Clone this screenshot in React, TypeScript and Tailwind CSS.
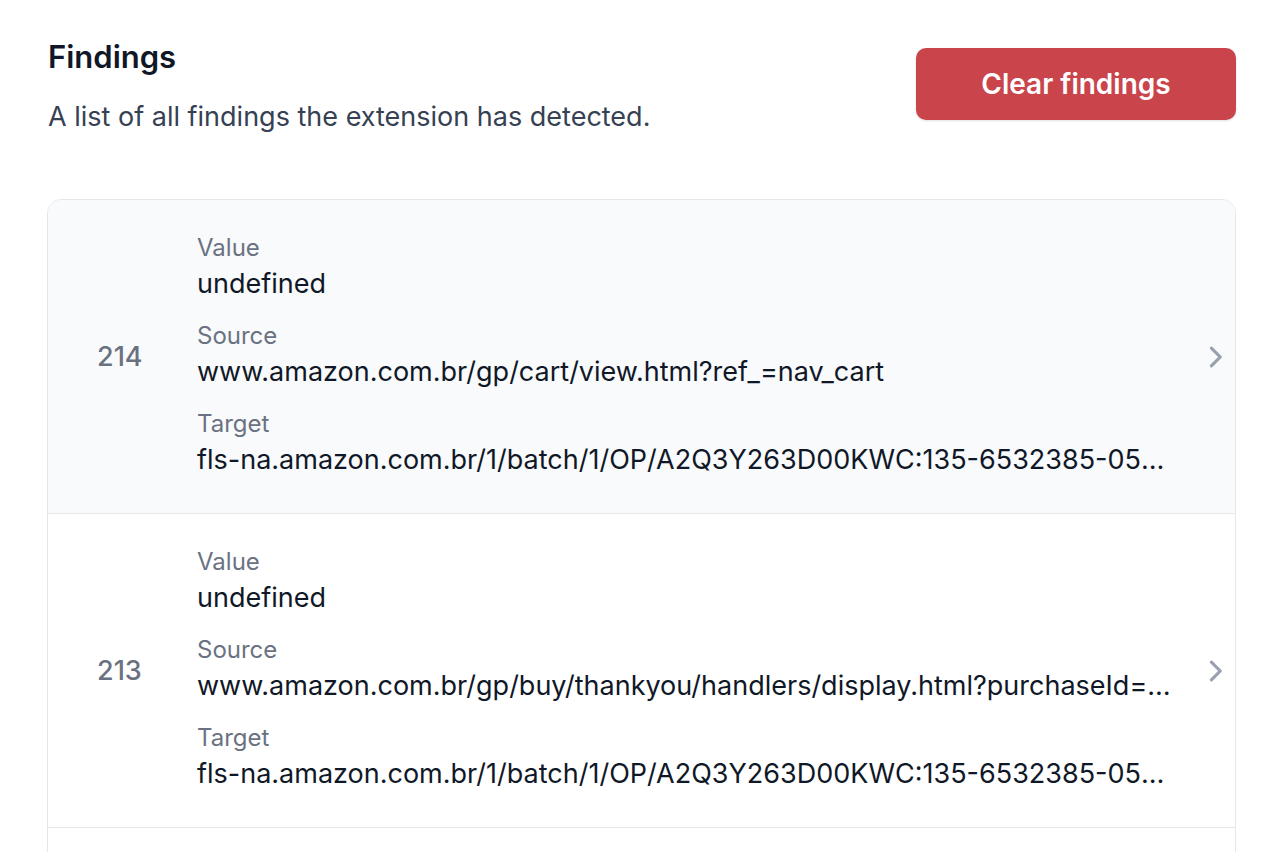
import React from 'react';

interface Finding {
  id: number;
  value: string;
  source: string;
  target: string;
}

const findings: Finding[] = [
  {
    id: 214,
    value: 'undefined',
    source: 'www.amazon.com.br/gp/cart/view.html?ref_=nav_cart',
    target: 'fls-na.amazon.com.br/1/batch/1/OP/A2Q3Y263D00KWC:135-6532385-0517953:JX6Q0ZBR5RWXSX9YA8XE$uedata=s:%2Frd%2Fuedata',
  },
  {
    id: 213,
    value: 'undefined',
    source: 'www.amazon.com.br/gp/buy/thankyou/handlers/display.html?purchaseId=106-1234567-8901234&ref_=chk_typ_browserRefresh',
    target: 'fls-na.amazon.com.br/1/batch/1/OP/A2Q3Y263D00KWC:135-6532385-0517953:JX6Q0ZBR5RWXSX9YA8XE$uedata=s:%2Frd%2Fuedata',
  },
  {
    id: 212,
    value: 'undefined',
    source: 'www.amazon.com.br/gp/buy/spc/handlers/display.html?hasWorkingJavascript=1',
    target: 'fls-na.amazon.com.br/1/batch/1/OP/A2Q3Y263D00KWC:135-6532385-0517953',
  },
];

const ChevronRight = () => (
  <svg viewBox="0 0 20 20" fill="currentColor" className="w-[42px] h-[42px] shrink-0 text-gray-400">
    <path
      fillRule="evenodd"
      d="M8.22 5.22a.75.75 0 0 1 1.06 0l4.25 4.25a.75.75 0 0 1 0 1.06l-4.25 4.25a.75.75 0 0 1-1.06-1.06L11.94 10 8.22 6.28a.75.75 0 0 1 0-1.06Z"
      clipRule="evenodd"
    />
  </svg>
);

const Field: React.FC<{ label: string; value: string; first?: boolean }> = ({ label, value, first }) => (
  <div className={first ? '' : 'mt-[16px]'}>
    <div className="text-[24px] leading-[29px] text-gray-500">{label}</div>
    <div className="text-[27px] leading-[43px] text-gray-900 truncate">{value}</div>
  </div>
);

export default function App() {
  return (
    <div className="h-screen overflow-hidden bg-white font-['Inter',sans-serif]">
      <div className="pl-[48px] pr-[32px] pt-[36px]">
        {/* Header */}
        <div className="flex items-start justify-between">
          <div>
            <h1 className="text-[31px] leading-[42px] font-semibold text-gray-900">Findings</h1>
            <p className="mt-[18px] text-[27px] leading-[42px] text-gray-700">
              A list of all findings the extension has detected.
            </p>
          </div>
          <button className="mt-[12px] w-[320px] h-[72px] rounded-[10px] bg-[#ca444b] text-white text-[28px] font-semibold shadow-sm">
            Clear findings
          </button>
        </div>

        {/* List */}
        <div className="mt-[61px] -ml-[1px] border border-gray-200 rounded-[14px] overflow-hidden">
          {findings.map((f, i) => (
            <div
              key={f.id}
              className={`flex items-center pl-[49px] pt-[33px] pb-[32px] ${
                i === 0 ? 'bg-gray-50' : 'bg-white'
              } ${i > 0 ? 'border-t border-gray-200' : ''}`}
            >
              <div className="w-[100px] shrink-0 text-[27px] font-medium text-gray-500">{f.id}</div>
              <div className="flex-1 min-w-0 pr-[18px]">
                <Field label="Value" value={f.value} first />
                <Field label="Source" value={f.source} />
                <Field label="Target" value={f.target} />
              </div>
              <ChevronRight />
            </div>
          ))}
        </div>
      </div>
    </div>
  );
}
